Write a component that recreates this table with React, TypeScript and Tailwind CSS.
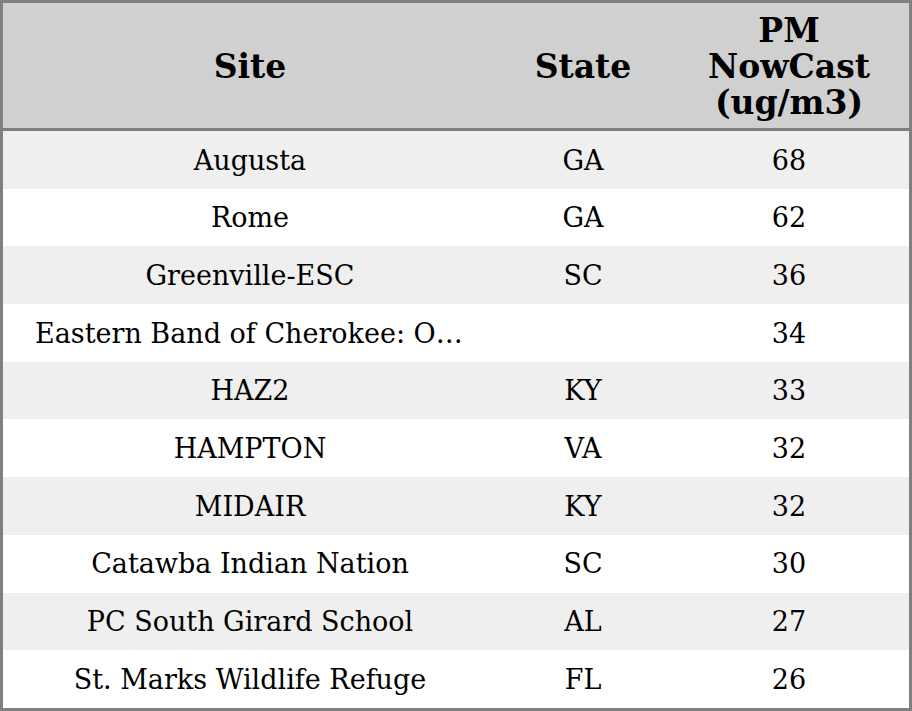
const rows = [
  { site: "Augusta", state: "GA", pm: 68 },
  { site: "Rome", state: "GA", pm: 62 },
  { site: "Greenville-ESC", state: "SC", pm: 36 },
  { site: "Eastern Band of Cherokee: Oconaluftee", state: "", pm: 34 },
  { site: "HAZ2", state: "KY", pm: 33 },
  { site: "HAMPTON", state: "VA", pm: 32 },
  { site: "MIDAIR", state: "KY", pm: 32 },
  { site: "Catawba Indian Nation", state: "SC", pm: 30 },
  { site: "PC South Girard School", state: "AL", pm: 27 },
  { site: "St. Marks Wildlife Refuge", state: "FL", pm: 26 },
];

export default function App() {
  return (
    <div className="w-[912px] h-[711px] bg-white border-[3px] border-[#808080] overflow-hidden font-['DejaVu_Serif',serif] text-black">
      <div className="grid grid-cols-[494px_172px_240px] h-[128px] pt-[3px] bg-[#d0d0d0] border-b-[3px] border-[#808080] text-[33px] leading-[36px] font-bold">
        <div className="flex items-center justify-center">Site</div>
        <div className="flex items-center justify-center">State</div>
        <div className="flex items-center justify-center text-center">
          PM
          <br />
          NowCast
          <br />
          (ug/m3)
        </div>
      </div>
      <div className="flex flex-col">
        {rows.map((r, i) => (
          <div
            key={i}
            className={`grid grid-cols-[494px_172px_240px] h-[57.7px] pt-[2px] items-center text-[27px] ${i % 2 === 0 ? "bg-[#efefef]" : "bg-white"}`}
          >
            <div className="px-8 truncate text-center">{r.site}</div>
            <div className="text-center">{r.state}</div>
            <div className="text-center">{r.pm}</div>
          </div>
        ))}
      </div>
    </div>
  );
}
